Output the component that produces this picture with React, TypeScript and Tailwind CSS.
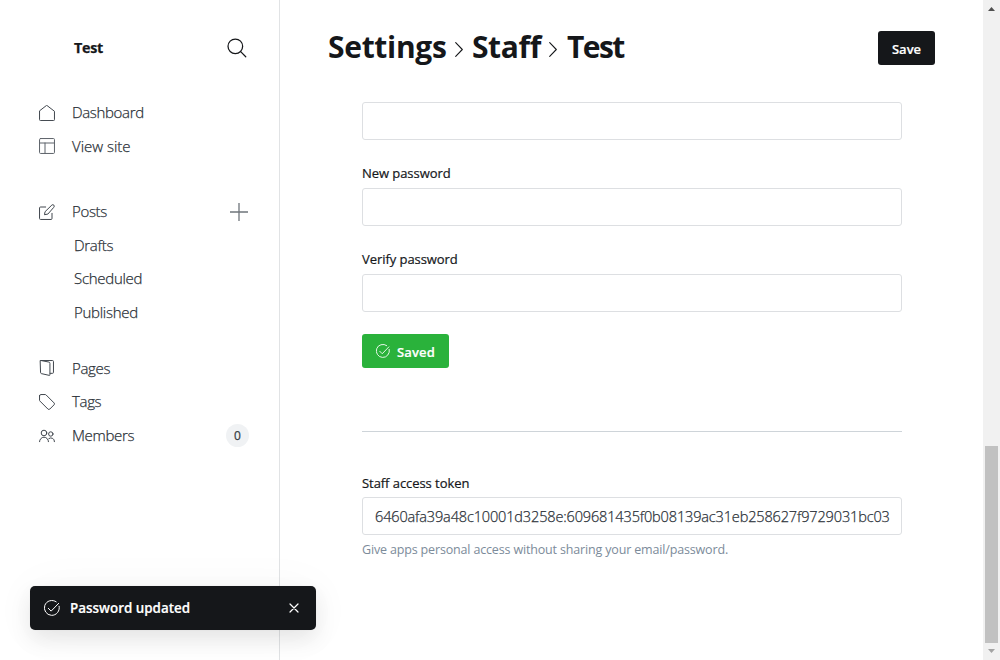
import type { ReactNode } from "react";

function Icon({ children, className = "size-4" }: { children: ReactNode; className?: string }) {
  return (
    <svg viewBox="0 0 24 24" fill="none" stroke="currentColor" strokeWidth="1.5" strokeLinecap="round" strokeLinejoin="round" className={className}>
      {children}
    </svg>
  );
}

function CheckCircle({ className }: { className: string }) {
  return (
    <Icon className={className}>
      <path d="M22.7 9.3A11.2 11.2 0 1 1 18.3 2.7" />
      <path d="M6.5 12.5l4.2 4.2L22 5" />
    </Icon>
  );
}

function NavItem({ icon, label, tracking = "tracking-[-0.34px]", children }: { icon: ReactNode; label: string; tracking?: string; children?: ReactNode }) {
  return (
    <a className="flex h-[33.5px] items-center pr-[31px] pl-[39px]">
      <span className="flex w-[33px] pt-px text-[#41474e]">{icon}</span>
      <span className={`flex-1 ${tracking}`}>{label}</span>
      {children}
    </a>
  );
}

function SubItem({ label }: { label: string }) {
  return <a className="flex h-[33.5px] items-center pl-[74px] tracking-[-0.28px]">{label}</a>;
}

function Sidebar() {
  return (
    <nav className="flex w-[280px] shrink-0 flex-col border-r border-[#e1e3e5] text-[15px] font-light text-[#2b3138] [-webkit-text-stroke:0.25px]">
      <div className="flex h-[95.6px] items-center justify-between pr-8 pl-[74px]">
        <span className="text-[14.3px] font-bold tracking-[-0.3px] text-[#15171a]">Test</span>
        <Icon className="size-5 text-[#15171a]">
          <circle cx="10" cy="10" r="8.8" />
          <path d="M16.4 16.4L22.5 22.5" />
        </Icon>
      </div>
      <div className="flex flex-col">
        <NavItem label="Dashboard" icon={<Icon><path d="M.8 9.4V22a1.3 1.3 0 0 0 1.3 1.3h19.8a1.3 1.3 0 0 0 1.3-1.3V9.4L12 .8z" /></Icon>} />
        <NavItem label="View site" tracking="tracking-[-0.02px]" icon={<Icon><g className="text-[#5d636a]" stroke="currentColor"><rect x=".8" y=".8" width="22.4" height="22.4" rx="1.5" /><path d="M.8 7.5h22.4M9 7.5v15.7" /></g></Icon>} />
      </div>
      <div className="mt-8 flex flex-col">
        <NavItem
          label="Posts"
          icon={
            <Icon>
              <path d="M19.5 14v7.7a1.5 1.5 0 0 1-1.5 1.5H2.3a1.5 1.5 0 0 1-1.5-1.5V6a1.5 1.5 0 0 1 1.5-1.5H10" />
              <path d="M12.8 15.2l-4.6.9.9-4.6L19.3 1.6a2.2 2.2 0 0 1 3.1 3.1z" />
            </Icon>
          }
        >
          <svg viewBox="0 0 18 18" className="mt-px size-[18px] text-[#6f757b]" stroke="currentColor" strokeWidth="1.3">
            <path d="M0 9h18M9 0v18" />
          </svg>
        </NavItem>
        <SubItem label="Drafts" />
        <SubItem label="Scheduled" />
        <SubItem label="Published" />
      </div>
      <div className="mt-[22.9px] flex flex-col">
        <NavItem
          label="Pages"
          icon={
            <Icon className="-mt-px size-4">
              <path d="M2.3.8h1l11.5 2.3a2 2 0 0 1 1.6 2V22a1 1 0 0 1-1.3 1L3.5 20.4a1.5 1.5 0 0 1-1.2-1.5z" />
              <path d="M3.3.8h17a1.4 1.4 0 0 1 1.4 1.4v16.4a1.4 1.4 0 0 1-1.4 1.4h-3.5" />
            </Icon>
          }
        />
        <NavItem label="Tags" icon={<Icon><path d="M.8 2.8v6.4a2 2 0 0 0 .6 1.4l12 12a2 2 0 0 0 2.8 0l6.4-6.4a2 2 0 0 0 0-2.8l-12-12A2 2 0 0 0 9.2.8H2.8a2 2 0 0 0-2 2z" /></Icon>} />
        <NavItem
          label="Members"
          icon={
            <Icon>
              <circle cx="7.5" cy="7.5" r="4.2" />
              <circle cx="17.7" cy="9" r="3.3" />
              <path d="M.8 20.5a6.7 6.7 0 0 1 13.4 0M14.8 15.8a5.4 5.4 0 0 1 8.4 4.7" />
            </Icon>
          }
        >
          <span className="-mr-px flex h-[23px] w-[23px] items-center justify-center rounded-full bg-[#f0f2f4] pt-0.5 text-[12px] font-medium text-[#394047]">0</span>
        </NavItem>
      </div>
    </nav>
  );
}

function Chevron() {
  return (
    <svg viewBox="0 0 8 15" className="mt-[3px] h-[15px] w-2 text-[#15171a]" fill="none" stroke="currentColor" strokeWidth="1.1" strokeLinecap="round" strokeLinejoin="round">
      <path d="M.7.7L7.3 7.5.7 14.3" />
    </svg>
  );
}

function Field({ label, value = "" }: { label?: string; value?: string }) {
  return (
    <div className="flex flex-col">
      {label && <label className={`text-[13px] leading-5 font-medium tracking-[-0.06px] text-[#15171a] [-webkit-text-stroke:0.2px] ${value ? "h-6" : "h-[25px]"}`}>{label}</label>}
      <div className="flex h-[38px] items-center overflow-hidden rounded-[3px] border border-[#dddfe2] px-3 pt-0.5 text-[14.5px] font-light tracking-[-0.14px] whitespace-nowrap text-[#2b3138] [-webkit-text-stroke:0.25px]">{value}</div>
    </div>
  );
}

function Scrollbar() {
  return (
    <div className="flex w-[17px] shrink-0 flex-col items-center bg-[#f1f1f1]">
      <svg viewBox="0 0 17 17" className="size-[17px] text-[#505050]" fill="currentColor"><path d="M5 11h7L8.5 7z" /></svg>
      <div className="mt-[429px] h-[197px] w-[13px] bg-[#c1c1c1]" />
      <svg viewBox="0 0 17 17" className="size-[17px] text-[#a3a3a3]" fill="currentColor"><path d="M5 6h7L8.5 10z" /></svg>
    </div>
  );
}

export default function App() {
  return (
    <div className="relative flex h-[660px] w-[1000px] overflow-hidden bg-white font-['Open_Sans',sans-serif]">
      <Sidebar />
      <main className="flex min-w-0 flex-1 flex-col">
        <header className="flex h-24 items-center justify-between pr-12 pl-12">
          <h1 className="flex items-center text-[30px] leading-9 font-bold text-[#15171a]">
            <span className="w-[120px] pb-0.5 tracking-[-0.3px]">Settings</span>
            <span className="flex w-6 justify-center pr-0.5"><Chevron /></span>
            <span className="w-[70px] pb-0.5 tracking-[-0.4px]">Staff</span>
            <span className="flex w-6 justify-center pr-0.5"><Chevron /></span>
            <span className="pb-0.5 pl-px tracking-[-1.6px]">Test</span>
          </h1>
          <button className="h-[34px] w-[57px] rounded-[3px] bg-[#15171a] pt-[3px] text-[13px] font-semibold text-white [-webkit-text-stroke:0.2px]">Save</button>
        </header>
        <section className="flex flex-col pt-1.5 pr-[81px] pl-[82px]">
          <Field />
          <div className="mt-[23px]"><Field label="New password" /></div>
          <div className="mt-[23px]"><Field label="Verify password" /></div>
          <button className="mt-[22px] flex h-[34px] w-[87px] items-center rounded-[3px] bg-[#2ab23b] pl-3.5 text-[13px] font-semibold text-white">
            <CheckCircle className="mr-[7px] size-3.5" />
            <span className="pt-[3px] tracking-[0.15px] [-webkit-text-stroke:0.2px]">Saved</span>
          </button>
          <hr className="mt-[63px] border-[#ced4d9]" />
          <div className="mt-[41px]"><Field label="Staff access token" value="6460afa39a48c10001d3258e:609681435f0b08139ac31eb258627f9729031bc03" /></div>
          <p className="mt-[5px] text-[12.5px] leading-5 tracking-[-0.16px] text-[#7c8b9a]">Give apps personal access without sharing your email/password.</p>
        </section>
      </main>
      <Scrollbar />
      <aside className="absolute bottom-[30px] left-[30px] flex h-11 w-[286px] items-center rounded-[5px] bg-[#15171a] pr-[17px] pl-3.5 text-white shadow-[0_0_1px_rgba(0,0,0,.12),0_9px_22px_rgba(0,0,0,.09),0_3px_50px_rgba(0,0,0,.04)]">
        <CheckCircle className="mr-2.5 size-4" />
        <span className="flex-1 pt-px text-[13.4px] font-semibold [-webkit-text-stroke:0.2px]">Password updated</span>
        <svg viewBox="0 0 10 10" className="size-2.5" stroke="currentColor" strokeWidth="1.2" strokeLinecap="round"><path d="M1 1l8 8M9 1L1 9" /></svg>
      </aside>
    </div>
  );
}
